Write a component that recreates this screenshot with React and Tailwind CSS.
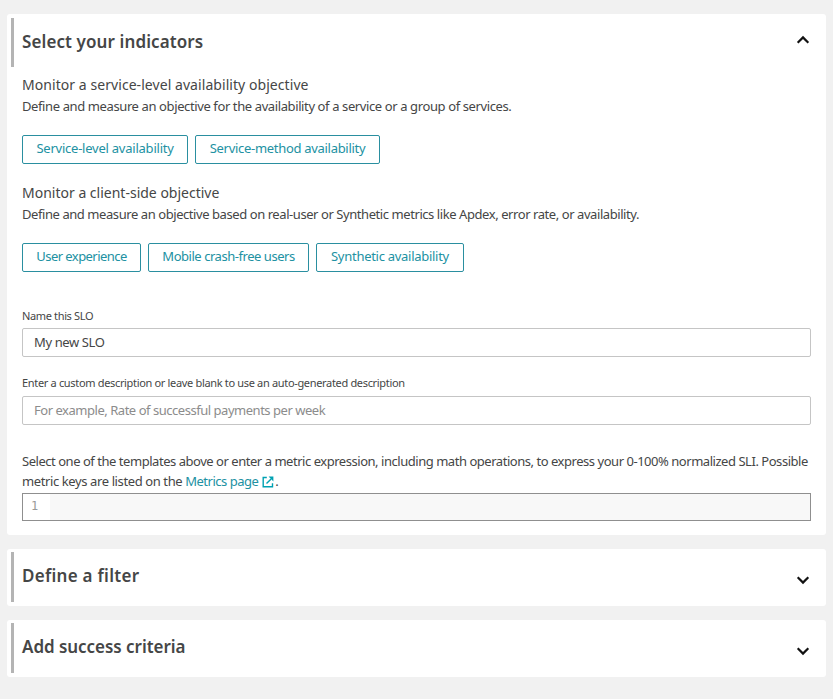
import React from "react";

function Chevron({ up }) {
  return (
    <svg width="14" height="10" viewBox="0 0 14 10" fill="none" stroke="#111" strokeWidth="2.2" className="shrink-0">
      <path d={up ? "M1.7 7.7 7 2.4l5.3 5.3" : "M1.7 2.3 7 7.6l5.3-5.3"} />
    </svg>
  );
}

function Title({ children, open, spacing }) {
  return (
    <div className={open ? "flex h-[49px] border-l-[3px] border-[#b4b4b4] pl-2" : "flex h-[50px] border-l-[3px] border-[#b4b4b4] pl-2"}>
      <h2 className={`${spacing} flex h-12 flex-1 items-center text-[17px] font-semibold whitespace-nowrap`}>{children}</h2>
      <div className={open ? "mt-[17px] mr-4" : "mt-[23px] mr-4"}>
        <Chevron up={open} />
      </div>
    </div>
  );
}

function Choice({ width, spacing, children }) {
  return (
    <button className={`${width} ${spacing} h-[29px] rounded-[2px] border border-[#2a8fa0] pb-[2px] text-center leading-[25px] whitespace-nowrap text-[#2191a2]`}>
      {children}
    </button>
  );
}

export default function App() {
  return (
    <main className="flex h-[699px] w-[833px] flex-col gap-[14px] bg-[#f1f1f1] pt-[14px] pr-[7px] pl-[7px] font-['Noto_Sans',sans-serif] text-[13px] tracking-[-0.39px] text-[#454646]">
      <section className="h-[521px] rounded-[3px] bg-white pt-1 pl-1">
        <Title open spacing="tracking-[0.1px]">Select your indicators</Title>
        <div className="flex flex-col pr-[15px] pl-[11px]">
          <h3 className="mt-[7px] h-[22px] text-[14px] leading-[22px] tracking-[0.06px] whitespace-nowrap"><span>Monitor a service-level availability objective</span></h3>
          <p className="h-[21px] leading-5 whitespace-nowrap"><span>Define and measure an objective for the availability of a service or a group of services.</span></p>
          <div className="mt-[18px] flex gap-[7px]">
            <Choice width="w-[166px]" spacing="tracking-[-0.23px]">Service-level availability</Choice>
            <Choice width="w-[185px]" spacing="tracking-[-0.3px]">Service-method availability</Choice>
          </div>
          <h3 className="mt-[18px] h-[22px] text-[14px] leading-[22px] tracking-normal whitespace-nowrap"><span>Monitor a client-side objective</span></h3>
          <p className="h-[21px] leading-5 tracking-[-0.43px] whitespace-nowrap"><span>Define and measure an objective based on real-user or Synthetic metrics like Apdex, error rate, or availability.</span></p>
          <div className="mt-[18px] flex gap-[7px]">
            <Choice width="w-[119px]" spacing="tracking-[-0.56px]">User experience</Choice>
            <Choice width="w-[161px]" spacing="tracking-[-0.46px]">Mobile crash-free users</Choice>
            <Choice width="w-[148px]" spacing="tracking-[-0.28px]">Synthetic availability</Choice>
          </div>
          <label className="mt-[35px] h-[21px] text-[11px] leading-[18px] tracking-[-0.36px]"><span>Name this SLO</span></label>
          <div className="h-[29px] rounded-[2px] border border-[#c5c5c5] pl-[11px] leading-[27px]"><span>My new SLO</span></div>
          <label className="mt-[17px] h-[22px] text-[11px] leading-[18px] tracking-[-0.33px]"><span>Enter a custom description or leave blank to use an auto-generated description</span></label>
          <div className="h-[29px] rounded-[2px] border border-[#c5c5c5] pl-[11px] leading-[27px] tracking-[-0.47px] text-[#8c8c8c]"><span>For example, Rate of successful payments per week</span></div>
          <p className="mt-[26px] h-[42px] leading-5 whitespace-nowrap">
            <span className="tracking-[-0.465px]">Select one of the templates above or enter a metric expression, including math operations, to express your 0-100% normalized SLI. Possible</span>
            <br />
            <span>metric keys are listed on the </span>
            <a className="text-[#2191a2]">
              <span className="tracking-[-0.5px]">Metrics page</span>
              <svg width="12" height="12" viewBox="0 0 12 12" fill="none" stroke="#00a1b2" strokeWidth="1.4" className="mr-px ml-1 inline-block align-[-2px]">
                <path d="M4.8 1.5H1.2v9.3h9.3V7.2M4.5 7.5l4.6-4.6" />
                <path d="M6.6.6h4.8v4.8z" fill="#00a1b2" stroke="none" />
              </svg>
            </a>
            .
          </p>
          <div className="flex h-7 border border-[#8f8f8f] bg-[#f8f8f8]">
            <div className="w-[27px] bg-white pl-2 font-['DejaVu_Sans_Mono',monospace] text-[12px] leading-[25px] text-[#999]">1</div>
          </div>
        </div>
      </section>
      <section className="h-[57px] rounded-[3px] bg-white pt-[3px] pl-1">
        <Title spacing="tracking-[0.27px]">Define a filter</Title>
      </section>
      <section className="h-[57px] rounded-[3px] bg-white pt-[3px] pl-1">
        <Title spacing="tracking-[-0.04px]">Add success criteria</Title>
      </section>
    </main>
  );
}
